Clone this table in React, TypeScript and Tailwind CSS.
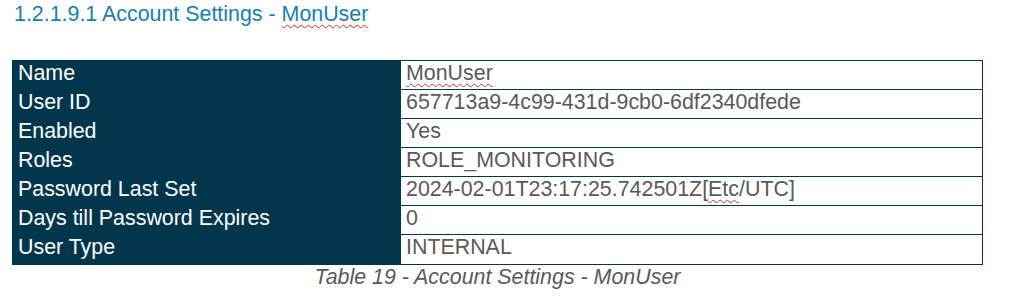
import React from "react";

const rows: { label: string; value: React.ReactNode }[] = [
  { label: "Name", value: <span className="underline decoration-wavy decoration-[#e0302a] decoration-1 underline-offset-[3px]">MonUser</span> },
  { label: "User ID", value: "657713a9-4c99-431d-9cb0-6df2340dfede" },
  { label: "Enabled", value: "Yes" },
  { label: "Roles", value: "ROLE_MONITORING" },
  {
    label: "Password Last Set",
    value: (
      <>
        2024-02-01T23:17:25.742501Z[
        <span className="underline decoration-wavy decoration-[#e0302a] decoration-1 underline-offset-[3px]">Etc</span>
        /UTC]
      </>
    ),
  },
  { label: "Days till Password Expires", value: "0" },
  { label: "User Type", value: "INTERNAL" },
];

export default function App() {
  return (
    <div
      className="w-[1013px] h-[300px] bg-white overflow-hidden"
      style={{ fontFamily: '"Liberation Sans", Arial, sans-serif' }}
    >
      <div className="pl-[14px] pt-[2px] text-[21.4px] leading-[24px] text-[#1580b4]">
        1.2.1.9.1 Account Settings -{" "}
        <span className="underline decoration-wavy decoration-[#e0302a] decoration-1 underline-offset-[3px]">MonUser</span>
      </div>
      <div className="ml-[12px] mt-[34px] w-[971px]">
        <div className="border border-[#02364c]">
          {rows.map((r, i) => (
            <div
              key={r.label}
              className={`flex h-[29px] ${i < rows.length - 1 ? "border-b border-[#02364c]" : ""}`}
            >
              <div className="w-[388px] bg-[#02364c] pl-[5px] text-[21.4px] leading-[24px] text-white">
                {r.label}
              </div>
              <div className="flex-1 bg-white pl-[5px] text-[21.4px] leading-[24px] text-[#595959]">
                {r.value}
              </div>
            </div>
          ))}
        </div>
        <div className="text-center italic text-[21.4px] leading-[24px] text-[#595959]">
          Table 19 - Account Settings - MonUser
        </div>
      </div>
    </div>
  );
}
